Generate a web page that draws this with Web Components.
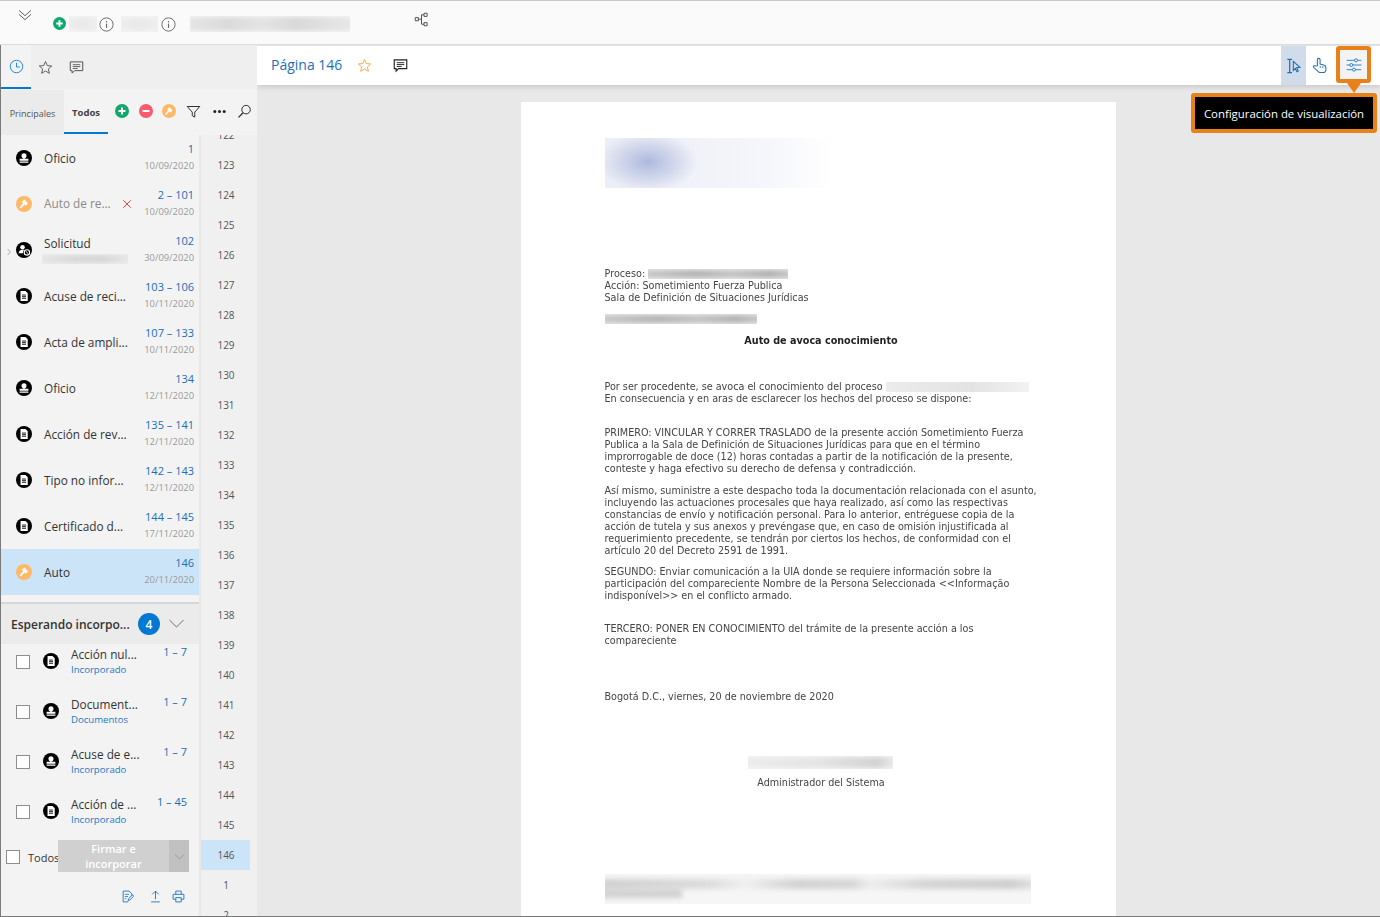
<!DOCTYPE html>
<html lang="es">
<head>
<meta charset="utf-8">
<title>Visor</title>
<style>
  html, body { margin: 0; padding: 0; height: 100%; overflow: hidden; background: #e8e8e8; }
  body { font-family: "Open Sans", "Liberation Sans", sans-serif; }
</style>
</head>
<body>
<app-shell></app-shell>

<script>
const ICONS = {
  stamp: '<circle cx="12" cy="12" r="12" fill="#000"/><circle cx="12" cy="8.6" r="3.8" fill="#fff"/><path d="M10.6 10h2.8v3.2h-2.8z" fill="#fff"/><path d="M5.4 13h13.2v3.2H5.4zM5.400 17.400h13.200v1.800H5.400z" fill="#fff"/>',
  doc: '<circle cx="12" cy="12" r="12" fill="#000"/><path d="M6.800 4.600h7.400l3.400 3.400v11.400H6.800z" fill="#fff"/><path d="M9 10.600h6M9 13h6M9 15.400h6" stroke="#000" stroke-width="1.300"/>',
  person: '<circle cx="12" cy="12" r="12" fill="#000"/><circle cx="9.800" cy="7.800" r="3.400" fill="#fff"/><path d="M3.800 16.800c.4-3.600 2.800-5.200 6-5.200 1 0 1.900.2 2.600.5-1.400 1-2 2.800-1.800 4.700z" fill="#fff"/><circle cx="16.400" cy="15.600" r="4" fill="none" stroke="#fff" stroke-width="1.700"/><path d="M14.400 13.600l4 4" stroke="#fff" stroke-width="1.500"/>',
  hammer: '<circle cx="12" cy="12" r="12" fill="#ffb966"/><path d="M10.600 7l5.600 5.600" stroke="#fff" stroke-width="5.200" fill="none"/><path d="M13 10.400l-6.600 7.400" stroke="#fff" stroke-width="2.800" fill="none"/>',
  plus: '<circle cx="12" cy="12" r="12" fill="#10a86c"/><path d="M12 6v12M6 12h12" stroke="#fff" stroke-width="3.400"/>',
  minus: '<circle cx="12" cy="12" r="12" fill="#f85c6c"/><path d="M6 12h12" stroke="#fff" stroke-width="3.400"/>',
  funnel: '<path d="M2 4h20l-8 9v8l-4-2.400V13z" fill="none" stroke="#222" stroke-width="1.500" stroke-linejoin="round"/>',
  dots: '<circle cx="4.500" cy="12" r="2.400" fill="#222"/><circle cx="12" cy="12" r="2.400" fill="#222"/><circle cx="19.500" cy="12" r="2.400" fill="#222"/>',
  search: '<circle cx="14.500" cy="9" r="6.800" fill="none" stroke="#222" stroke-width="1.500"/><path d="M9.600 14L2.500 21.500" stroke="#222" stroke-width="1.800"/>',
  clock: '<circle cx="12" cy="12" r="10" fill="none" stroke="#1683dc" stroke-width="1.500"/><path d="M12 6v6.800h5.400" fill="none" stroke="#1683dc" stroke-width="1.500"/>',
  star: '<path d="M12 2.400l2.900 6.500 7 .7-5.300 4.700 1.600 7-6.200-3.700-6.200 3.700 1.600-7L2.100 9.600l7-.7z" fill="none" stroke="#555" stroke-width="1.500" stroke-linejoin="round"/>',
  starOrange: '<path d="M12 2.400l2.900 6.500 7 .7-5.300 4.700 1.600 7-6.200-3.700-6.200 3.700 1.600-7L2.100 9.600l7-.7z" fill="none" stroke="#f7ab4f" stroke-width="1.600" stroke-linejoin="round"/>',
  comment: '<path d="M2 3h20v14H9l-4 4v-4H2z" fill="none" stroke="#555" stroke-width="1.600"/><path d="M6 7.500h12M6 10.500h12M6 13.500h8" stroke="#555" stroke-width="1.400"/>',
  commentDark: '<path d="M2 3h20v14H9l-4 4v-4H2z" fill="none" stroke="#222" stroke-width="1.800"/><path d="M6 7.500h12M6 10.500h12M6 13.500h8" stroke="#222" stroke-width="1.500"/>',
  cross: '<path d="M3 3l18 18M21 3L3 21" stroke="#ee1c25" stroke-width="2"/>',
  info: '<circle cx="12" cy="12" r="10.600" fill="none" stroke="#666" stroke-width="1.500"/><path d="M12 10.500v7" stroke="#666" stroke-width="1.800"/><circle cx="12" cy="7.400" r="1.200" fill="#666"/>',
  chevrons: '<path d="M3 5l9 8 9-8M3 11l9 8 9-8" fill="none" stroke="#555" stroke-width="1.400"/>',
  tree: '<path d="M2 9h5v5H2zM16 2h5v5h-5zM16 17h5v5h-5z" fill="none" stroke="#555" stroke-width="1.600"/><path d="M7 11.500h5M12 4.500h4M12 19.500h4M12 4.500v15" fill="none" stroke="#555" stroke-width="1.600"/>',
  chevron: '<path d="M2 7l10 10L22 7" fill="none" stroke="#666" stroke-width="1.300"/>',
  chevronLight: '<path d="M2 8l10 9 10-9" fill="none" stroke="#8d8d8d" stroke-width="1.500"/>',
  chevronRight: '<path d="M8 3l8 9-8 9" fill="none" stroke="#999" stroke-width="2.400"/>',
  note: '<path d="M4 2h11l5 5v4M4 2v20h9" fill="none" stroke="#2a7dc4" stroke-width="1.800"/><path d="M7 8h8M7 12h6M7 16h3" stroke="#2a7dc4" stroke-width="1.600"/><path d="M13 20l1-4 7-7 2.400 2.400-7 7z" fill="none" stroke="#2a7dc4" stroke-width="1.800"/>',
  upload: '<path d="M12 2v15M6 8l6-6 6 6M4 22h16" fill="none" stroke="#2a7dc4" stroke-width="1.800"/>',
  print: '<path d="M7 8V2h10v6M7 17H2V8h20v9h-5" fill="none" stroke="#2a7dc4" stroke-width="1.800"/><path d="M7 14h10v8H7z" fill="none" stroke="#2a7dc4" stroke-width="1.800"/>',
  select: '<path d="M2 2h7M2 22h7M5.500 2v20" fill="none" stroke="#1e6fb8" stroke-width="1.800"/><path d="M11 5l10 9-5 .6 2.400 5-2 1-2.400-5-3 3z" fill="none" stroke="#1e6fb8" stroke-width="1.600"/>',
  hand: '<path d="M9 12.500V3.800a1.900 1.900 0 0 1 3.800 0V10l5 1.300c2 .5 3.200 1.700 3.200 3.500v2.700c0 2.500-2 4.500-4.500 4.500h-2.900c-2 0-3.300-.8-4.400-2.300L3.500 14.500c-1-1.600 1.300-3.200 2.500-1.800z" fill="none" stroke="#1e6fb8" stroke-width="1.500"/><path d="M13 12.500v3M16.500 12.800v3" stroke="#1e6fb8" stroke-width="1.200"/>',
  sliders: '<path d="M1 5h22M1 12h22M1 19h22" stroke="#2a7dc4" stroke-width="1.400"/><circle cx="15" cy="5" r="2.300" fill="#f3f3f3" stroke="#2a7dc4" stroke-width="1.400"/><circle cx="8" cy="12" r="2.300" fill="#f3f3f3" stroke="#2a7dc4" stroke-width="1.400"/><circle cx="12" cy="19" r="2.300" fill="#f3f3f3" stroke="#2a7dc4" stroke-width="1.400"/>'
};

class UiIcon extends HTMLElement {
  connectedCallback() {
    const size = this.getAttribute('size') || 16;
    this.attachShadow({ mode: 'open' });
    this.shadowRoot.innerHTML = `
      <style>
        :host { display: inline-flex; flex: none; width: ${size}px; height: ${size}px; }
        svg { width: 100%; height: 100%; display: block; }
      </style>
      <svg viewBox="0 0 24 24" aria-hidden="true">${ICONS[this.getAttribute('name')] || ''}</svg>
    `;
  }
}

// redacted areas of the screenshot: soft bar on a pale rectangle
class BlurBox extends HTMLElement {
  connectedCallback() {
    this.attachShadow({ mode: 'open' });
    this.shadowRoot.innerHTML = `
      <style>
        :host {
          display: block;
          flex: none;
          box-sizing: border-box;
          overflow: hidden;
          padding: var(--pad, 1px 0);
          background: var(--base, #ededed);
        }
        .in {
          height: 100%;
          margin: 0 -3px;
          background: var(--tone, linear-gradient(90deg, #c8c8c8, #b4b4b4 35%, #c4c4c4 60%, #b2b2b2 85%, #c8c8c8));
          filter: blur(var(--soft, 2px));
        }
      </style>
      <div class="in"></div>
    `;
  }
}

class TopBar extends HTMLElement {
  connectedCallback() {
    this.attachShadow({ mode: 'open' });
    this.shadowRoot.innerHTML = `
      <style>
        :host {
          display: flex;
          align-items: flex-start;
          height: 43px;
          background: #fafafa;
          border-top: 1px solid #c9c9c9;
          border-bottom: 1px solid #dcdcdc;
          box-sizing: content-box;
        }
        .chev { margin: 6px 0 0 17px; }
        .plus { margin: 15.500px 0 0 20px; }
        .light { --base: #f5f5f5; --tone: linear-gradient(90deg, #eeeeee, #e9e9e9, #efefef); height: 16px; margin-top: 15px; }
        .info { margin-top: 15.500px; }
        .name { --tone: linear-gradient(90deg, #e6e6e6, #dadada 25%, #e4e4e4 45%, #d8d8d8 65%, #e8e8e8); }
        .tree { margin: 11px 0 0 63.500px; }
      </style>
      <ui-icon class="chev" name="chevrons" size="16"></ui-icon>
      <ui-icon class="plus" name="plus" size="13"></ui-icon>
      <blur-box class="light" style="width:28px;margin-left:3px"></blur-box>
      <ui-icon class="info" name="info" size="15" style="margin-left:2px"></ui-icon>
      <blur-box class="light" style="width:37px;margin-left:7px"></blur-box>
      <ui-icon class="info" name="info" size="15" style="margin-left:2.500px"></ui-icon>
      <blur-box class="light name" style="width:160px;margin-left:14.500px"></blur-box>
      <ui-icon class="tree" name="tree" size="15"></ui-icon>
    `;
  }
}

class DocRow extends HTMLElement {
  connectedCallback() {
    const range = this.getAttribute('range');
    const date = this.getAttribute('date');
    const icon = this.getAttribute('icon');
    this.attachShadow({ mode: 'open' });
    this.shadowRoot.innerHTML = `
      <style>
        :host {
          display: flex;
          align-items: center;
          height: 46px;
          position: relative;
          padding: 0 5px 0 15px;
          color: #333;
          font-size: 11.800px;
        }
        :host([selected]) { background: #cce4f7; }
        :host([muted]) { color: #8a8a8a; }
        .arrow { position: absolute; left: 4px; top: 21px; }
        .title { flex: 1; min-width: 0; margin-left: 12px; white-space: nowrap; }
        :host([muted]) .title { margin-top: -2px; }
        .side { text-align: right; flex: none; margin-top: -1px; }
        .range { color: #1a6fb8; font-size: 11px; line-height: 16px; margin-top: -1px; white-space: nowrap; }
        .date { color: #9a9a9a; font-size: 9.400px; line-height: 16px; margin-top: 1px; }
      </style>
      ${this.hasAttribute('arrow') ? '<ui-icon class="arrow" name="chevronRight" size="8"></ui-icon>' : ''}
      <ui-icon name="${icon}" size="16"></ui-icon>
      <div class="title"><slot></slot></div>
      <slot name="mark"></slot>
      <div class="side">
        <div class="range">${range}</div>
        <div class="date">${date}</div>
      </div>
    `;
  }
}

class PendingRow extends HTMLElement {
  connectedCallback() {
    this.attachShadow({ mode: 'open' });
    this.shadowRoot.innerHTML = `
      <style>
        :host {
          display: flex;
          align-items: flex-start;
          height: 50px;
          padding: 0 12px 0 15px;
          box-sizing: border-box;
          color: #333;
          font-size: 11.800px;
        }
        .box { width: 12px; height: 12px; border: 1px solid #8e8e8e; background: #fff; margin-top: 11px; flex: none; }
        ui-icon { margin: 9px 0 0 13px; }
        .text { flex: 1; min-width: 0; margin-left: 12px; }
        .title { line-height: 18px; margin-top: 1px; white-space: nowrap; }
        .sub { color: #1a7ac8; font-size: 9.600px; line-height: 12px; margin-top: 1px; }
        .range { color: #1a6fb8; font-size: 11px; line-height: 16px; white-space: nowrap; }
      </style>
      <div class="box"></div>
      <ui-icon name="${this.getAttribute('icon')}" size="16"></ui-icon>
      <div class="text">
        <div class="title"><slot></slot></div>
        <div class="sub">${this.getAttribute('sub')}</div>
      </div>
      <div class="range">${this.getAttribute('range')}</div>
    `;
  }
}

class ThumbStrip extends HTMLElement {
  connectedCallback() {
    const pages = [];
    for (let n = 122; n <= 146; n++) pages.push(n);
    pages.push(1, 2);
    this.attachShadow({ mode: 'open' });
    this.shadowRoot.innerHTML = `
      <style>
        :host {
          display: block;
          flex: none;
          width: 56px;
          overflow: hidden;
          background: #f0f0f0;
          border-left: 2px solid #e8e8e8;
        }
        .list { margin-top: -15px; width: 49px; }
        .page { height: 30px; line-height: 30px; text-align: center; color: #555; font-size: 10px; padding-left: 1px; box-sizing: border-box; }
        .page.on { background: #cce4f7; }
      </style>
      <div class="list">
        ${pages.map(p => `<div class="page${p === 146 ? ' on' : ''}">${p}</div>`).join('')}
      </div>
    `;
  }
}

class PendingHeader extends HTMLElement {
  connectedCallback() {
    this.attachShadow({ mode: 'open' });
    this.shadowRoot.innerHTML = `
      <style>
        :host {
          display: flex;
          align-items: center;
          height: 40px;
          margin-top: 7px;
          border-top: 2px solid #d6d6d6;
          background: #ebebeb;
          padding-left: 10px;
          color: #333;
          font-size: 12px;
          font-weight: 600;
        }
        .title { flex: none; width: 127px; white-space: nowrap; }
        .badge {
          width: 22px; height: 22px; border-radius: 50%;
          background: #0078d4; color: #fff;
          font-size: 12px; font-weight: 600;
          display: flex; align-items: center; justify-content: center;
        }
        ui-icon { margin-left: 8px; margin-top: -2px; }
      </style>
      <span class="title"><slot></slot></span>
      <span class="badge">${this.getAttribute('count')}</span>
      <ui-icon name="chevron" size="17"></ui-icon>
    `;
  }
}

class PendingFooter extends HTMLElement {
  connectedCallback() {
    this.attachShadow({ mode: 'open' });
    this.shadowRoot.innerHTML = `
      <style>
        :host { display: block; margin-top: -4px; color: #333; font-size: 11px; }
        .row { display: flex; align-items: center; height: 32px; padding-left: 5px; }
        .box { width: 12px; height: 12px; border: 1px solid #8e8e8e; background: #fff; flex: none; margin-top: 2px; }
        .label { margin-left: 8px; width: 30px; flex: none; padding-top: 2px; white-space: nowrap; }
        .btn {
          width: 111px; height: 32px; background: #d0d0d0; color: #fff;
          font-size: 11px; font-weight: 600; line-height: 15px;
          text-align: center; display: flex; align-items: center; justify-content: center;
        }
        .drop { width: 20px; height: 32px; background: #c1c1c1; display: flex; align-items: center; justify-content: center; }
        .tools { display: flex; justify-content: flex-end; gap: 10px; padding: 18px 14px 0 0; align-items: center; }
      </style>
      <div class="row">
        <div class="box"></div>
        <div class="label">Todos</div>
        <div class="btn">Firmar e<br>incorporar</div>
        <div class="drop"><ui-icon name="chevronLight" size="11"></ui-icon></div>
      </div>
      <div class="tools">
        <ui-icon name="note" size="13" style="margin-right:5px"></ui-icon>
        <ui-icon name="upload" size="13"></ui-icon>
        <ui-icon name="print" size="13"></ui-icon>
      </div>
    `;
  }
}

class SidePanel extends HTMLElement {
  connectedCallback() {
    this.attachShadow({ mode: 'open' });
    this.shadowRoot.innerHTML = `
      <style>
        :host {
          display: flex;
          flex-direction: column;
          flex: none;
          width: 256px;
          background: #f3f3f3;
          border-left: 1px solid #7a7a7a;
          min-height: 0;
        }
        .tabs { display: flex; align-items: stretch; height: 44px; background: #efefef; flex: none; }
        .tab { width: 30px; display: flex; align-items: center; justify-content: center; box-sizing: border-box; }
        .tab.on { background: #f3f3f3; border-bottom: 2px solid #0078d4; }
        .sub { display: flex; height: 45px; margin-top: 1px; background: #f3f3f3; flex: none; align-items: stretch; font-size: 9px; color: #555; }
        .principal { width: 63px; background: #ebebeb; display: flex; align-items: center; justify-content: center; padding-top: 1px; box-sizing: border-box; }
        .todos { width: 44px; display: flex; align-items: center; justify-content: center; font-size: 9.500px; font-weight: 700; border-bottom: 2px solid #0078d4; height: 44px; box-sizing: border-box; padding-top: 2px; color: #444; }
        .actions { display: flex; align-items: center; height: 42px; }
        .body { flex: 1; display: flex; min-height: 0; }
        .list { width: 198px; flex: none; display: flex; flex-direction: column; overflow: hidden; }
        .rows { flex: none; }
      </style>
      <div class="tabs">
        <div class="tab on"><ui-icon name="clock" size="15"></ui-icon></div>
        <div class="tab"><ui-icon name="star" size="15" style="margin-left:-1px"></ui-icon></div>
        <div class="tab"><ui-icon name="comment" size="15"></ui-icon></div>
      </div>
      <div class="sub">
        <div class="principal">Principales</div>
        <div class="todos">Todos</div>
        <div class="actions">
          <ui-icon name="plus" size="14" style="margin-left:7px"></ui-icon>
          <ui-icon name="minus" size="14" style="margin-left:10px"></ui-icon>
          <ui-icon name="hammer" size="14" style="margin-left:9px"></ui-icon>
          <ui-icon name="funnel" size="15" style="margin-left:9.500px"></ui-icon>
          <ui-icon name="dots" size="15" style="margin-left:11px"></ui-icon>
          <ui-icon name="search" size="15" style="margin-left:10px"></ui-icon>
        </div>
      </div>
      <div class="body">
        <div class="list">
          <div class="rows">
            <doc-row icon="stamp" range="1" date="10/09/2020">Oficio</doc-row>
            <doc-row icon="hammer" range="2 – 101" date="10/09/2020" muted>Auto de re...<ui-icon slot="mark" name="cross" size="10" style="margin-right:12px"></ui-icon></doc-row>
            <doc-row icon="person" range="102" date="30/09/2020" arrow>
              <div style="margin-top:-8px">Solicitud</div>
              <blur-box style="--base:#efefef;--tone:linear-gradient(90deg,#e6e6e6,#d8d8d8 40%,#d6d6d6 70%,#e8e8e8);width:86px;height:10px;margin:3px 0 -6px -2px"></blur-box>
            </doc-row>
            <doc-row icon="doc" range="103 – 106" date="10/11/2020">Acuse de reci...</doc-row>
            <doc-row icon="doc" range="107 – 133" date="10/11/2020">Acta de ampli...</doc-row>
            <doc-row icon="stamp" range="134" date="12/11/2020">Oficio</doc-row>
            <doc-row icon="doc" range="135 – 141" date="12/11/2020">Acción de rev...</doc-row>
            <doc-row icon="doc" range="142 – 143" date="12/11/2020">Tipo no infor...</doc-row>
            <doc-row icon="doc" range="144 – 145" date="17/11/2020">Certificado d...</doc-row>
            <doc-row icon="hammer" range="146" date="20/11/2020" selected>Auto</doc-row>
          </div>
          <pending-header count="4">Esperando incorpo...</pending-header>
          <pending-row icon="doc" sub="Incorporado" range="1 – 7">Acción nul...</pending-row>
          <pending-row icon="stamp" sub="Documentos" range="1 – 7">Document...</pending-row>
          <pending-row icon="stamp" sub="Incorporado" range="1 – 7">Acuse de e...</pending-row>
          <pending-row icon="doc" sub="Incorporado" range="1 – 45">Acción de ...</pending-row>
          <pending-footer></pending-footer>
        </div>
        <thumb-strip></thumb-strip>
      </div>
    `;
  }
}

class ViewerToolbar extends HTMLElement {
  connectedCallback() {
    this.attachShadow({ mode: 'open' });
    this.shadowRoot.innerHTML = `
      <style>
        :host {
          display: flex;
          align-items: center;
          height: 39px;
          margin-top: 1px;
          background: #fff;
          padding-left: 14px;
          box-shadow: 0 2px 5px rgba(0,0,0,.14);
          position: relative;
          flex: none;
        }
        .title { color: #1f6fb5; font-size: 14px; white-space: nowrap; margin-top: -2px; }
        .tools { margin-left: auto; display: flex; align-items: stretch; height: 39px; padding-right: 9px; }
        .tool { width: 23px; display: flex; align-items: center; justify-content: center; }
        .tool.on { width: 25px; background: #d0dce9; }
        .focus {
          width: 27px; height: 29px; margin-left: 7px;
          background: #f3f3f3; border: 4px solid #e8811a; border-radius: 3px;
          display: flex; align-items: center; justify-content: center;
          position: relative;
        }
        .focus::after {
          content: ''; position: absolute; left: 50%; bottom: -14px; margin-left: -7px;
          border: 7px solid transparent; border-top-color: #e8811a; border-bottom-width: 0; border-top-width: 10px;
        }
      </style>
      <span class="title"><slot></slot></span>
      <ui-icon name="starOrange" size="15" style="margin-left:15px;margin-top:-1px"></ui-icon>
      <ui-icon name="commentDark" size="15" style="margin-left:21px;margin-top:-1px"></ui-icon>
      <div class="tools">
        <div class="tool on"><ui-icon name="select" size="16"></ui-icon></div>
        <div class="tool"><ui-icon name="hand" size="17" style="margin-left:3px;margin-top:-1px"></ui-icon></div>
        <div class="focus"><ui-icon name="sliders" size="16"></ui-icon></div>
      </div>
    `;
  }
}

class ToolTip extends HTMLElement {
  connectedCallback() {
    this.attachShadow({ mode: 'open' });
    this.shadowRoot.innerHTML = `
      <style>
        :host {
          position: absolute;
          top: 48px;
          right: 3px;
          width: 186px;
          height: 40px;
          box-sizing: border-box;
          background: #000;
          border: 4px solid #e8811a;
          border-radius: 3px;
          color: #fff;
          font-size: 11.400px;
          display: flex;
          align-items: center;
          justify-content: center;
          white-space: nowrap;
        }
      </style>
      <slot></slot>
    `;
  }
}

class DocPage extends HTMLElement {
  connectedCallback() {
    this.attachShadow({ mode: 'open' });
    this.shadowRoot.innerHTML = `
      <style>
        :host {
          display: block;
          width: 595px;
          height: 830px;
          box-sizing: border-box;
          margin: 17px 0 0 264px;
          padding: 36px 0 0 83.500px;
          background: #fff;
          font-family: "DejaVu Sans", sans-serif;
          font-size: 9.630px;
          line-height: 12px;
          color: #444;
          overflow: hidden;
          flex: none;
        }
        p { margin: 0; white-space: nowrap; filter: blur(.25px); }
        .logo {
          --pad: 0;
          --soft: 0;
          --base: #fff;
          --tone: radial-gradient(ellipse 50px 30px at 46px 24px, #aeb9dd, rgba(183,193,224,0)), linear-gradient(90deg, #eceef7, #f5f6fb 70%, #fff);
          width: 226px; height: 50px;
        }
        .line { display: inline-block; vertical-align: top; }
        .center { text-align: center; width: 433px; }
        h2 { margin: 11px 0 0; font-size: 9.630px; line-height: 12px; font-weight: 700; color: #222; width: 433px; text-align: center; filter: blur(.25px); }
      </style>
      <blur-box class="logo"></blur-box>
      <p style="margin-top:80px">Proceso: <blur-box class="line" style="width:140px;height:10px;margin-top:1px"></blur-box><br>
      Acción: Sometimiento Fuerza Publica<br>
      Sala de Definición de Situaciones Jurídicas</p>
      <blur-box style="width:152px;height:10px;margin-top:10px"></blur-box>
      <h2>Auto de avoca conocimiento</h2>
      <p style="margin-top:34px">Por ser procedente, se avoca el conocimiento del proceso <blur-box class="line" style="--pad:0;--soft:0;--tone:linear-gradient(90deg,#ececec,#e3e3e3 60%,#f3f3f3);width:143px;height:10px;margin-top:1px"></blur-box><br>
      En consecuencia y en aras de esclarecer los hechos del proceso se dispone:</p>
      <p style="margin-top:22px">PRIMERO: VINCULAR Y CORRER TRASLADO de la presente acción Sometimiento Fuerza<br>
      Publica a la Sala de Definición de Situaciones Jurídicas para que en el término<br>
      improrrogable de doce (12) horas contadas a partir de la notificación de la presente,<br>
      conteste y haga efectivo su derecho de defensa y contradicción.</p>
      <p style="margin-top:10px">Así mismo, suministre a este despacho toda la documentación relacionada con el asunto,<br>
      incluyendo las actuaciones procesales que haya realizado, así como las respectivas<br>
      constancias de envío y notificación personal. Para lo anterior, entréguese copia de la<br>
      acción de tutela y sus anexos y prevéngase que, en caso de omisión injustificada al<br>
      requerimiento precedente, se tendrán por ciertos los hechos, de conformidad con el<br>
      artículo 20 del Decreto 2591 de 1991.</p>
      <p style="margin-top:9px">SEGUNDO: Enviar comunicación a la UIA donde se requiere información sobre la<br>
      participación del compareciente Nombre de la Persona Seleccionada &lt;&lt;Informação<br>
      indisponível&gt;&gt; en el conflicto armado.</p>
      <p style="margin-top:21px">TERCERO: PONER EN CONOCIMIENTO del trámite de la presente acción a los<br>
      compareciente</p>
      <p style="margin-top:44px">Bogotá D.C., viernes, 20 de noviembre de 2020</p>
      <blur-box style="--base:#f5f5f5;--tone:linear-gradient(90deg,#ececec,#e4e4e4 50%,#d2d2d2 88%,#ececec);width:145px;height:13px;margin:53px 0 0 143px"></blur-box>
      <p class="center" style="margin-top:8px">Administrador del Sistema</p>
      <blur-box style="--base:#f6f6f6;--pad:3px 0;--soft:2.500px;--tone:linear-gradient(#d0d0d0,#d0d0d0) 0 13px/80px 8px no-repeat,linear-gradient(90deg,#d0d0d0,#dcdcdc 25%,#f0f0f0 33%,#d2d2d2 45%,#d6d6d6 58%,#eeeeee 62%,#d4d4d4 75%,#cecece 95%,#e2e2e2) 0 2px/100% 10px no-repeat;width:426px;height:30px;margin-top:85px"></blur-box>
    `;
  }
}

class AppShell extends HTMLElement {
  connectedCallback() {
    this.attachShadow({ mode: 'open' });
    this.shadowRoot.innerHTML = `
      <style>
        :host {
          display: flex;
          flex-direction: column;
          width: 1380px;
          height: 917px;
          box-sizing: border-box;
          overflow: hidden;
          position: relative;
          border-bottom: 1px solid #777;
          font-family: "Open Sans", "Liberation Sans", sans-serif;
        }
        .main { flex: 1; display: flex; min-height: 0; }
        .viewer { flex: 1; display: flex; flex-direction: column; min-width: 0; background: #e8e8e8; position: relative; overflow: hidden; }
      </style>
      <top-bar></top-bar>
      <div class="main">
        <side-panel></side-panel>
        <div class="viewer">
          <viewer-toolbar>Página 146</viewer-toolbar>
          <doc-page></doc-page>
          <tool-tip>Configuración de visualización</tool-tip>
        </div>
      </div>
    `;
  }
}

customElements.define('ui-icon', UiIcon);
customElements.define('blur-box', BlurBox);
customElements.define('top-bar', TopBar);
customElements.define('doc-row', DocRow);
customElements.define('pending-row', PendingRow);
customElements.define('pending-header', PendingHeader);
customElements.define('pending-footer', PendingFooter);
customElements.define('thumb-strip', ThumbStrip);
customElements.define('side-panel', SidePanel);
customElements.define('viewer-toolbar', ViewerToolbar);
customElements.define('tool-tip', ToolTip);
customElements.define('doc-page', DocPage);
customElements.define('app-shell', AppShell);
</script>
</body>
</html>
